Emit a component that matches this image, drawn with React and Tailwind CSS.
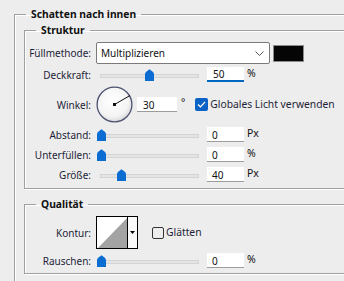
import React from 'react';

const Thumb = ({ left }) => (
    <svg
        className="absolute top-[1px]"
        style={{ left }}
        width="9"
        height="12"
        viewBox="0 0 9 12"
    >
        <path d="M0 5 Q0 3.5 1.5 2.5 L4.5 0.3 L7.5 2.5 Q9 3.5 9 5 V12 H0 Z" fill="#0b6cd2" />
    </svg>
);

const Slider = ({ left }) => (
    <div className="relative w-[104px] h-[14px] shrink-0">
        <div className="absolute left-[4px] right-[1px] top-[6px] h-[4px] bg-[#e4e4e4] border border-[#d4d4d4]" />
        <Thumb left={left} />
    </div>
);

const Field = ({ value, unit, focused }) => (
    <div className="flex items-center">
        <div
            className={
                focused
                    ? 'w-[37px] h-[15px] bg-white border-b-2 border-[#0067c0] pl-[6px] pt-[1px] flex items-center leading-none text-[#111]'
                    : 'w-[37px] h-[15px] bg-white border-b border-[#9c9c9c] pl-[5px] pt-[1px] flex items-center leading-none text-[#111]'
            }
        >
            {value}
        </div>
        <span className="ml-[3px] -mt-[3px] leading-none text-[#111] text-[10.5px]">{unit}</span>
    </div>
);

const Label = ({ children }) => (
    <div className="w-[66px] shrink-0 text-right text-[#1e1e38] leading-none">{children}</div>
);

const SliderRow = ({ label, left, value, unit, focused, className }) => (
    <div className={'flex items-center h-[15px] ' + className}>
        <Label>{label}</Label>
        <div className="ml-[5px]">
            <Slider left={left} />
        </div>
        <div className="ml-[7px]">
            <Field value={value} unit={unit} focused={focused} />
        </div>
    </div>
);

const Dial = () => (
    <svg width="37" height="37" viewBox="0 0 37 37">
        <defs>
            <radialGradient id="dialFill" cx="45%" cy="40%" r="60%">
                <stop offset="0%" stopColor="#ffffff" />
                <stop offset="75%" stopColor="#f4f4f4" />
                <stop offset="100%" stopColor="#d8d8d8" />
            </radialGradient>
        </defs>
        <circle cx="18.5" cy="18.5" r="17.4" fill="url(#dialFill)" stroke="#4b5272" strokeWidth="1.3" />
        <line x1="18.5" y1="18.5" x2="34" y2="9.5" stroke="#111" strokeWidth="1" />
        <rect x="17" y="17" width="3" height="3" fill="#111" />
    </svg>
);

const legendCls = 'ml-[11px] px-[5px] font-bold text-[#111] text-[10.3px] leading-[16px]';
const boxCls = 'border border-[#a0a0a0] shadow-[1px_1px_0_#ffffff,inset_1px_1px_0_#ffffff]';

export default function App() {
    return (
        <div className="w-[344px] h-[281px] overflow-hidden bg-[#ededed] font-['Noto_Sans',sans-serif] text-[10px]">
            <fieldset className={'mt-[6px] ml-[14px] w-[420px] h-[300px] pl-[9px] ' + boxCls}>
                <legend className="ml-[2px] px-[5px] font-bold text-[#111] text-[10.3px] leading-[16px]">Schatten nach innen</legend>

                <fieldset className={'pt-[4px] pb-[6px] ' + boxCls}>
                    <legend className={legendCls}>Struktur</legend>

                    <div className="flex items-center h-[22px]">
                        <Label>Füllmethode:</Label>
                        <div className="ml-[5px] w-[174px] h-[22px] bg-white border border-[#7a7a7a] rounded-[2px] pl-[4px] pr-[5px] flex items-center justify-between">
                            <span className="text-[#111] leading-none">Multiplizieren</span>
                            <svg width="9" height="5" viewBox="0 0 9 5">
                                <path d="M0.5 0.5 L4.5 4.5 L8.5 0.5" fill="none" stroke="#555" strokeWidth="1" />
                            </svg>
                        </div>
                        <div className="ml-[3px] w-[31px] h-[17px] border border-[#8c8c8c] bg-[#050505]" />
                    </div>

                    <SliderRow className="mt-[3px]" label="Deckkraft:" left={49} value="50" unit="%" focused />

                    <div className="flex items-center h-[37px] mt-[4px]">
                        <Label>Winkel:</Label>
                        <div className="ml-[5px] flex">
                            <Dial />
                        </div>
                        <div className="ml-[4px] w-[40px] h-[15px] bg-white border-b border-[#9c9c9c] pl-[6px] pt-[1px] flex items-center leading-none text-[#111]">
                            30
                        </div>
                        <span className="ml-[4px] -mt-[6px] leading-none text-[#111]">°</span>
                        <div className="ml-[10px] w-[13px] h-[13px] rounded-[2px] bg-[#0b62c6] flex items-center justify-center">
                            <svg width="9" height="7" viewBox="0 0 9 7">
                                <path d="M1 3.5 L3.4 5.8 L8 1" fill="none" stroke="#fff" strokeWidth="1.2" />
                            </svg>
                        </div>
                        <span className="ml-[2px] leading-none text-[#1e1e38] text-[10.3px]">Globales Licht verwenden</span>
                    </div>

                    <SliderRow className="mt-[4px]" label="Abstand:" left={1} value="0" unit="Px" />
                    <SliderRow className="mt-[5px]" label="Unterfüllen:" left={1} value="0" unit="%" />
                    <SliderRow className="mt-[5px]" label="Größe:" left={21} value="40" unit="Px" />
                </fieldset>

                <fieldset className={'mt-[7px] pt-[4px] pb-[5px] ' + boxCls}>
                    <legend className={legendCls}>Qualität</legend>

                    <div className="flex items-center h-[33px]">
                        <Label>Kontur:</Label>
                        <div className="ml-[5px] w-[42px] h-[33px] border border-black flex">
                            <div className="w-[30px] h-full bg-white flex">
                                <svg width="30" height="31" viewBox="0 0 30 31">
                                    <polygon points="1,31 30,1 30,31" fill="#a3a3a3" />
                                </svg>
                            </div>
                            <div className="flex-1 border-l border-black bg-[#f9f9f9] flex items-center justify-center">
                                <svg width="5" height="3" viewBox="0 0 5 3">
                                    <polygon points="0,0 5,0 2.5,3" fill="#000" />
                                </svg>
                            </div>
                        </div>
                        <div className="ml-[14px] w-[12px] h-[12px] rounded-[2px] border border-[#333]" />
                        <span className="ml-[2px] leading-none text-[#1e1e38] text-[10.3px]">Glätten</span>
                    </div>

                    <SliderRow className="mt-[4px]" label="Rauschen:" left={1} value="0" unit="%" />
                </fieldset>
            </fieldset>
        </div>
    );
}
